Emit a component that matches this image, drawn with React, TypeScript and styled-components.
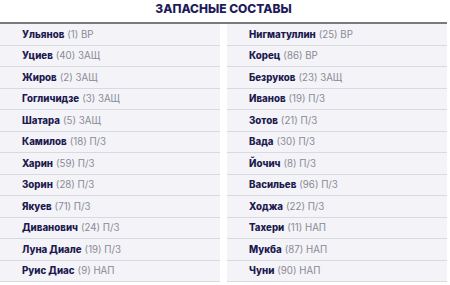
import React from 'react';
import styled, { createGlobalStyle } from 'styled-components';

const GlobalStyle = createGlobalStyle`
  body {
    margin: 0;
    background: #ffffff;
    font-family: Inter, "Open Sans", "Liberation Sans", sans-serif;
  }
`;

const Wrapper = styled.div`
  width: 447px;
`;

const Title = styled.h2`
  margin: 0;
  height: 22px;
  line-height: 18px;
  text-align: center;
  font-size: 12px;
  font-weight: 800;
  letter-spacing: 0;
  color: #1e1b5a;
  border-bottom: 2px solid #7a7a7e;
`;

const Columns = styled.div`
  display: grid;
  grid-template-columns: 1fr 1fr;
  column-gap: 7px;
`;

const Column = styled.div`
  display: flex;
  flex-direction: column;
`;

const Row = styled.div`
  box-sizing: border-box;
  height: 21.5px;
  display: flex;
  align-items: center;
  padding-left: 22px;
  background: #f3f3f8;
  border-bottom: 1px solid #d9d9e1;
  font-size: 9.7px;
  white-space: nowrap;
`;

const Name = styled.span`
  font-weight: 800;
  color: #1c1a4e;
  margin-right: 3px;
`;

const Info = styled.span`
  color: #8a8a94;
`;

type Player = { name: string; num: number; pos: string };

const left: Player[] = [
  { name: 'Ульянов', num: 1, pos: 'ВР' },
  { name: 'Уциев', num: 40, pos: 'ЗАЩ' },
  { name: 'Жиров', num: 2, pos: 'ЗАЩ' },
  { name: 'Гогличидзе', num: 3, pos: 'ЗАЩ' },
  { name: 'Шатара', num: 5, pos: 'ЗАЩ' },
  { name: 'Камилов', num: 18, pos: 'П/З' },
  { name: 'Харин', num: 59, pos: 'П/З' },
  { name: 'Зорин', num: 28, pos: 'П/З' },
  { name: 'Якуев', num: 71, pos: 'П/З' },
  { name: 'Диванович', num: 24, pos: 'П/З' },
  { name: 'Луна Диале', num: 19, pos: 'П/З' },
  { name: 'Руис Диас', num: 9, pos: 'НАП' },
];

const right: Player[] = [
  { name: 'Нигматуллин', num: 25, pos: 'ВР' },
  { name: 'Корец', num: 86, pos: 'ВР' },
  { name: 'Безруков', num: 23, pos: 'ЗАЩ' },
  { name: 'Иванов', num: 19, pos: 'П/З' },
  { name: 'Зотов', num: 21, pos: 'П/З' },
  { name: 'Вада', num: 30, pos: 'П/З' },
  { name: 'Йочич', num: 8, pos: 'П/З' },
  { name: 'Васильев', num: 96, pos: 'П/З' },
  { name: 'Ходжа', num: 22, pos: 'П/З' },
  { name: 'Тахери', num: 11, pos: 'НАП' },
  { name: 'Мукба', num: 87, pos: 'НАП' },
  { name: 'Чуни', num: 90, pos: 'НАП' },
];

const PlayerList: React.FC<{ players: Player[] }> = ({ players }) => (
  <Column>
    {players.map((p) => (
      <Row key={p.name}>
        <Name>{p.name}</Name>
        <Info>
          ({p.num}) {p.pos}
        </Info>
      </Row>
    ))}
  </Column>
);

const App: React.FC = () => (
  <>
    <GlobalStyle />
    <Wrapper>
      <Title>ЗАПАСНЫЕ СОСТАВЫ</Title>
      <Columns>
        <PlayerList players={left} />
        <PlayerList players={right} />
      </Columns>
    </Wrapper>
  </>
);

export default App;
